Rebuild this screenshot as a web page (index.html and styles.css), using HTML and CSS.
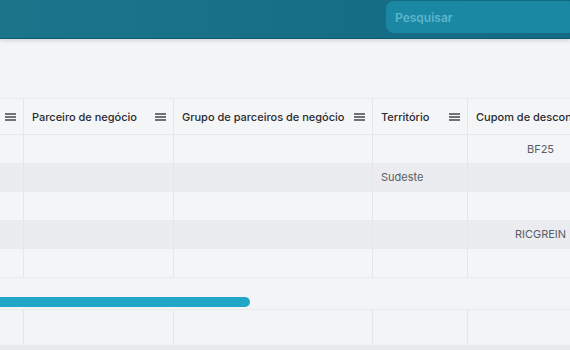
FILE: index.html
```html
<!DOCTYPE html>
<html lang="pt-BR">
<head>
    <meta charset="UTF-8">
    <meta name="viewport" content="width=device-width, initial-scale=1.0">
    <title>Pedidos</title>
    <link rel="stylesheet" href="styles.css">
</head>
<body>
    <header class="top-bar">
        <div class="search-box">Pesquisar</div>
    </header>

    <main class="content">
        <div class="grid">
            <div class="grid-row header-row">
                <div class="cell col-0"><span class="menu-icon"></span></div>
                <div class="cell col-1"><span class="label">Parceiro de negócio</span><span class="menu-icon"></span></div>
                <div class="cell col-2"><span class="label">Grupo de parceiros de negócio</span><span class="menu-icon"></span></div>
                <div class="cell col-3"><span class="label">Território</span><span class="menu-icon"></span></div>
                <div class="cell col-4"><span class="label">Cupom de desconto</span></div>
            </div>

            <div class="grid-row">
                <div class="cell col-0"></div>
                <div class="cell col-1"></div>
                <div class="cell col-2"></div>
                <div class="cell col-3"></div>
                <div class="cell col-4 center">BF25</div>
            </div>
            <div class="grid-row alt">
                <div class="cell col-0"></div>
                <div class="cell col-1"></div>
                <div class="cell col-2"></div>
                <div class="cell col-3">Sudeste</div>
                <div class="cell col-4"></div>
            </div>
            <div class="grid-row">
                <div class="cell col-0"></div>
                <div class="cell col-1"></div>
                <div class="cell col-2"></div>
                <div class="cell col-3"></div>
                <div class="cell col-4"></div>
            </div>
            <div class="grid-row alt">
                <div class="cell col-0"></div>
                <div class="cell col-1"></div>
                <div class="cell col-2"></div>
                <div class="cell col-3"></div>
                <div class="cell col-4 center">RICGREIN</div>
            </div>
            <div class="grid-row">
                <div class="cell col-0"></div>
                <div class="cell col-1"></div>
                <div class="cell col-2"></div>
                <div class="cell col-3"></div>
                <div class="cell col-4"></div>
            </div>

            <div class="scroll-track">
                <div class="scroll-thumb"></div>
            </div>

            <div class="grid-row footer-row">
                <div class="cell col-0"></div>
                <div class="cell col-1"></div>
                <div class="cell col-2"></div>
                <div class="cell col-3"></div>
                <div class="cell col-4"></div>
            </div>
        </div>
        <div class="bottom-strip"></div>
    </main>
</body>
</html>
```

FILE: styles.css
```css
* {
    box-sizing: border-box;
}

body {
    margin: 0;
    font-family: 'Inter', 'Liberation Sans', sans-serif;
    background-color: #f3f4f6;
    width: 570px;
    height: 350px;
    overflow: hidden;
}

.top-bar {
    height: 39px;
    display: flex;
    justify-content: flex-end;
    align-items: flex-start;
    padding-top: 1px;
    background: linear-gradient(90deg, #1a758b 0%, #166e86 60%, #146a82 100%);
    border-bottom: 1px solid #0f5a6e;
    box-shadow: 0 2px 4px rgba(0, 0, 0, 0.12);
}

.search-box {
    width: 190px;
    height: 32px;
    margin-right: -6px;
    padding-left: 9px;
    display: flex;
    align-items: center;
    background-color: #1a87a3;
    border-radius: 8px;
    color: #5db5cc;
    font-size: 12px;
    font-weight: 600;
}

.content {
    padding-top: 59px;
}

.grid {
    border-top: 1px solid #e9eaec;
}

.grid-row {
    display: flex;
    height: 28.5px;
    background-color: #f3f5f8;
    border-bottom: 1px solid #e8eaed;
}

.grid-row.alt {
    background-color: #ebecef;
}

.header-row {
    height: 36px;
    background-color: #f4f5f7;
    border-bottom: 1px solid #e6e7ea;
}

.footer-row {
    height: 37px;
    background-color: #f3f4f6;
    border-top: 1px solid #e8eaed;
}

.cell {
    flex-shrink: 0;
    display: flex;
    align-items: center;
    padding: 0 7px 0 8px;
    border-right: 1px solid #e4e6e9;
    font-size: 11px;
    color: #5a5d62;
}

.cell.center {
    justify-content: center;
}

.col-0 { width: 24px; padding: 0 7px 0 5px; }
.col-1 { width: 150px; }
.col-2 { width: 199px; }
.col-3 { width: 95px; }
.col-4 { width: 144px; border-right: none; }

.header-row .cell {
    justify-content: space-between;
    color: #2a2c30;
    font-size: 11px;
    font-weight: 500;
}

.header-row .col-4 {
    justify-content: flex-start;
    overflow: hidden;
}

.label {
    white-space: nowrap;
}

.menu-icon {
    width: 11px;
    height: 8px;
    flex-shrink: 0;
    border-top: 2px solid #6f7277;
    border-bottom: 2px solid #6f7277;
    background: linear-gradient(#6f7277, #6f7277) center / 100% 2px no-repeat;
}

.scroll-track {
    height: 31px;
    padding-top: 19px;
    background-color: #f3f4f6;
}

.scroll-thumb {
    width: 250px;
    height: 10px;
    background-color: #22a6c8;
    border-radius: 0 5px 5px 0;
}

.bottom-strip {
    height: 6px;
    background-color: #e8e9eb;
}
```
